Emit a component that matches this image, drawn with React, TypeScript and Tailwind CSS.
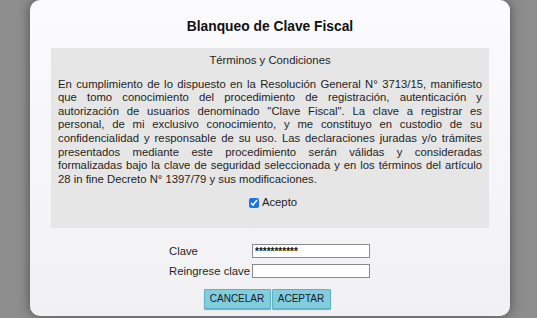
import React from "react";

export default function App() {
  const font = { fontFamily: '"Liberation Sans", Arial, sans-serif' };
  return (
    <div className="w-[537px] h-[318px] bg-[#8d8d8d] overflow-hidden" style={font}>
      <div className="ml-[30px] w-[480px] h-[316px] rounded-b-[10px] rounded-t-[10px] bg-gradient-to-b from-[#fbfbfd] to-[#f1f1f3] shadow-[0_0_12px_rgba(0,0,0,0.45)] flex flex-col">
        <div className="h-[48px] flex items-center justify-center pt-[6px]">
          <h1 className="text-[13.8px] font-bold text-[#111]">Blanqueo de Clave Fiscal</h1>
        </div>
        <div className="mx-[21px] bg-[#e6e6e6] pt-[6px] pb-[18px] px-[7px] text-[11.3px] leading-[13.6px] text-[#1e1e1e]">
          <p className="text-center">Términos y Condiciones</p>
          <p className="mt-[10px] text-justify">
            En cumplimiento de lo dispuesto en la Resolución General N° 3713/15, manifiesto que tomo conocimiento del procedimiento de registración, autenticación y autorización de usuarios denominado "Clave Fiscal". La clave a registrar es personal, de mi exclusivo conocimiento, y me constituyo en custodio de su confidencialidad y responsable de su uso. Las declaraciones juradas y/o trámites presentados mediante este procedimiento serán válidas y consideradas formalizadas bajo la clave de seguridad seleccionada y en los términos del artículo 28 in fine Decreto N° 1397/79 y sus modificaciones.
          </p>
          <div className="mt-[10px] flex items-center justify-center gap-[3px] pl-[6px]">
            <input type="checkbox" defaultChecked className="w-[10px] h-[10px] m-0 accent-[#1a73e8]" />
            <span>Acepto</span>
          </div>
        </div>
        <div className="mt-[15px] flex flex-col items-start pl-[139px] text-[11.3px] text-[#1e1e1e] gap-[3px]">
          <div className="flex items-center">
            <span className="w-[83px]">Clave</span>
            <input
              type="text"
              readOnly
              value="***********"
              className="w-[118px] h-[14px] border border-[#8a8a8a] bg-white px-[2px] text-[10px] font-bold leading-[12px] text-[#111] outline-none"
            />
          </div>
          <div className="flex items-center">
            <span className="w-[83px]">Reingrese clave</span>
            <input
              type="text"
              readOnly
              value=""
              className="w-[118px] h-[14px] border border-[#8a8a8a] bg-white px-[2px] text-[9px] outline-none"
            />
          </div>
        </div>
        <div className="mt-[9px] flex justify-center gap-[1px] pr-[6px]">
          <button className="w-[67px] h-[20px] bg-[#80cde0] border border-[#62b0c4] shadow-[0_1px_1px_rgba(0,0,0,0.35)] text-[10px] text-[#1a1a1a] rounded-[1px]">
            CANCELAR
          </button>
          <button className="w-[59px] h-[20px] bg-[#80cde0] border border-[#62b0c4] shadow-[0_1px_1px_rgba(0,0,0,0.35)] text-[10px] text-[#1a1a1a] rounded-[1px]">
            ACEPTAR
          </button>
        </div>
      </div>
    </div>
  );
}
